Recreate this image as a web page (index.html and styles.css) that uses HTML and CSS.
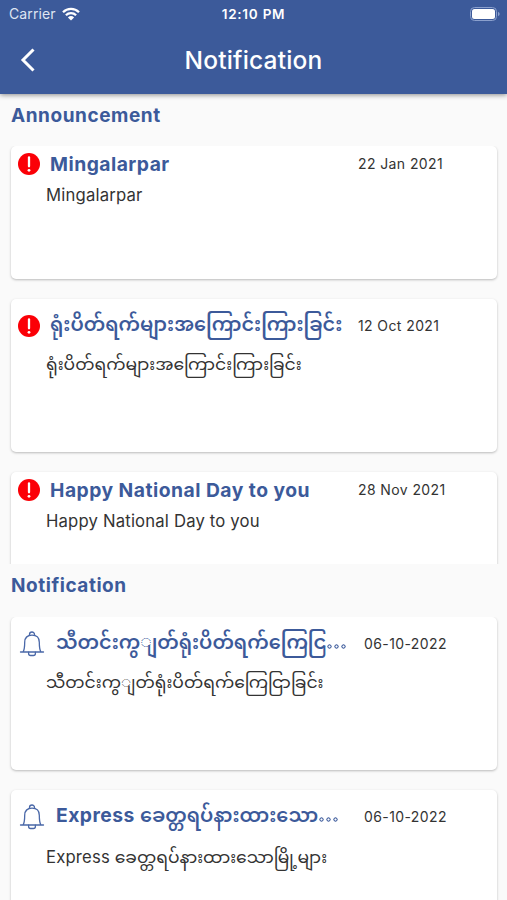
FILE: index.html
```
<!DOCTYPE html>
<html lang="en">
<head>
<meta charset="utf-8">
<title>Notification</title>
<link rel="stylesheet" href="styles.css">
</head>
<body>
<svg width="0" height="0" class="defs" aria-hidden="true">
  <symbol id="alert" viewBox="0 0 22 22">
    <circle cx="11" cy="11" r="11" fill="#fb0007"/>
    <path d="M11 4.500v8.800" stroke="#fff" stroke-width="2.300" stroke-linecap="round"/>
    <circle cx="11" cy="17.300" r="1.400" fill="#fff"/>
  </symbol>
  <symbol id="bell" viewBox="0 0 26 26">
    <g fill="none" stroke="#4a68a8" stroke-width="1.300" stroke-linecap="round" stroke-linejoin="round">
      <path d="M1.500 21h23M4 21c1.200-1.700 1.700-4.500 1.700-9.700C5.700 6.500 8.700 4.200 13 4.200s7.300 2.300 7.300 7.100c0 5.200.5 8 1.700 9.700"/>
      <path d="M10.500 4.400V3.500a2.500 2.500 0 0 1 5 0v.9"/>
      <path d="M9.600 21.200v1.300c0 1.200.9 2 2 2h2.800c1.100 0 2-.8 2-2v-1.300"/>
    </g>
  </symbol>
</svg>
<header class="appbar">
  <div class="status">
    <span class="carrier">Carrier</span>
    <svg class="wifi" viewBox="0 0 18 14"><g fill="none" stroke="#fff" stroke-width="2.300"><path d="M1 5.200a11.400 11.400 0 0 1 16 0"/><path d="M3.900 8.300a7.300 7.300 0 0 1 10.200 0"/></g><path d="M9 13.600 5.900 10.400a4.500 4.500 0 0 1 6.200 0z" fill="#fff"/></svg>
    <span class="clock">12:10 PM</span>
    <svg class="battery" viewBox="0 0 30 14"><rect x=".5" y=".5" width="26" height="13" rx="4" fill="none" stroke="#8ba0cd"/><rect x="2" y="2" width="23" height="10" rx="2.500" fill="#fff"/><path d="M28 4.800v4.400q1.700-.8 1.700-2.200T28 4.800" fill="#8ba0cd"/></svg>
  </div>
  <div class="titlebar">
    <svg class="back" viewBox="0 0 16 24"><path d="M13.500 1.500 3 12l10.500 10.500" fill="none" stroke="#fff" stroke-width="3"/></svg>
    <h1>Notification</h1>
  </div>
</header>
<main>
  <h2>Announcement</h2>
  <section class="list announcements">
    <article class="card">
      <div class="row"><svg class="alert"><use href="#alert"/></svg><h3>Mingalarpar</h3><time>22 Jan 2021</time></div>
      <p>Mingalarpar</p>
    </article>
    <article class="card tall">
      <div class="row"><svg class="alert"><use href="#alert"/></svg><h3 class="my" lang="my">ရုံးပိတ်ရက်များအကြောင်းကြားခြင်း</h3><time>12 Oct 2021</time></div>
      <p class="my" lang="my">ရုံးပိတ်ရက်များအကြောင်းကြားခြင်း</p>
    </article>
    <article class="card">
      <div class="row"><svg class="alert"><use href="#alert"/></svg><h3>Happy National Day to you</h3><time>28 Nov 2021</time></div>
      <p>Happy National Day to you</p>
    </article>
  </section>
  <h2 class="second">Notification</h2>
  <section class="list notices">
    <article class="card tall">
      <div class="row"><svg class="bell"><use href="#bell"/></svg><h3 class="my" lang="my">သီတင်းကွျတ်ရုံးပိတ်ရက်ကြေငြ<span class="more">...</span></h3><time>06-10-2022</time></div>
      <p class="my" lang="my">သီတင်းကွျတ်ရုံးပိတ်ရက်ကြေငြာခြင်း</p>
    </article>
    <article class="card tall">
      <div class="row"><svg class="bell"><use href="#bell"/></svg><h3>Express <span class="my" lang="my">ခေတ္တရပ်နားထားသော<span class="more">...</span></span></h3><time>06-10-2022</time></div>
      <p>Express <span class="my" lang="my">ခေတ္တရပ်နားထားသောမြို့များ</span></p>
    </article>
  </section>
</main>
</body>
</html>
```
FILE: styles.css
```
* { box-sizing: border-box; margin: 0; padding: 0; }
body { width: 507px; height: 900px; overflow: hidden; background: #fafafa; color: #333; font-family: Inter, "Noto Sans", "Noto Sans Myanmar", sans-serif; display: flex; flex-direction: column; }
svg { display: block; flex: none; }
.defs { position: absolute; }
.appbar { flex: none; height: 94px; background: #3c5a9a; color: #fff; box-shadow: 0 1px 5px rgba(0, 0, 0, .45); z-index: 1; }
.status { height: 27px; display: grid; grid-template-columns: 53px 1fr auto 1fr 53px; align-items: center; padding: 0 9px; }
.carrier { font-size: 14px; color: #dfe5f2; letter-spacing: .1px; }
.wifi { width: 18px; height: 14px; }
.clock { font-size: 13.5px; font-weight: 600; letter-spacing: .75px; }
.battery { width: 30px; height: 14px; grid-column: 5; justify-self: end; margin-right: -2px; }
.titlebar { height: 65px; display: grid; grid-template-columns: 60px 1fr 60px; align-items: center; }
.back { width: 16px; height: 24px; margin-left: 20px; }
h1 { font-size: 24.5px; font-weight: 500; letter-spacing: .2px; text-align: center; white-space: nowrap; }
main { flex: 1; min-height: 0; display: flex; flex-direction: column; }
h2 { flex: none; font-size: 19px; line-height: 24px; font-weight: 650; color: #3c5a9a; letter-spacing: .55px; padding: 10px 11px 0; height: 52px; }
h2.second { height: 53px; }
.list { overflow: hidden; padding: 0 10px 0 11px; display: flex; flex-direction: column; gap: 20px; }
.announcements { flex: none; height: 418px; }
.notices { flex: 1; }
.card { flex: none; height: 133px; background: #fff; border-radius: 5px; box-shadow: 0 1px 2.500px rgba(0, 0, 0, .26); }
.card.tall { height: 153px; }
.row { display: grid; grid-template-columns: 39px 308px 1fr; align-items: center; height: 36px; }
.tall .row { height: 54px; }
.alert { width: 22px; height: 22px; margin-left: 6.500px; }
.bell { width: 26px; height: 26px; margin-left: 7.500px; }
.notices .row { grid-template-columns: 45px 308px 1fr; }
h3 { font-size: 19.3px; font-weight: 650; letter-spacing: .48px; color: #3c5a9a; white-space: nowrap; line-height: 24px; }
.card:not(.tall) h3 { padding-bottom: 1px; }
time { font-size: 14px; letter-spacing: .4px; white-space: nowrap; padding-bottom: 1px; }
p { font-size: 16.7px; letter-spacing: .17px; line-height: 26px; padding-left: 35px; white-space: nowrap; }
.my { letter-spacing: 0; font-family: "Noto Sans Myanmar", "Noto Sans", sans-serif; }
h3.my, h3 .my { font-size: 19.25px; font-weight: 600; }
.tall h3 { padding-bottom: 2px; }
.tall h3.my { padding: 2px 0 0; }
p.my, p .my { font-size: 17.15px; }
.more { display: inline-block; font-size: 12px; letter-spacing: 3.500px; color: transparent; line-height: 5px; width: 21px; height: 5px; background: radial-gradient(circle, transparent .8px, #5872aa 1.200px, #5872aa 1.900px, transparent 2.400px) 0 0 / 7px 5px; }
```
